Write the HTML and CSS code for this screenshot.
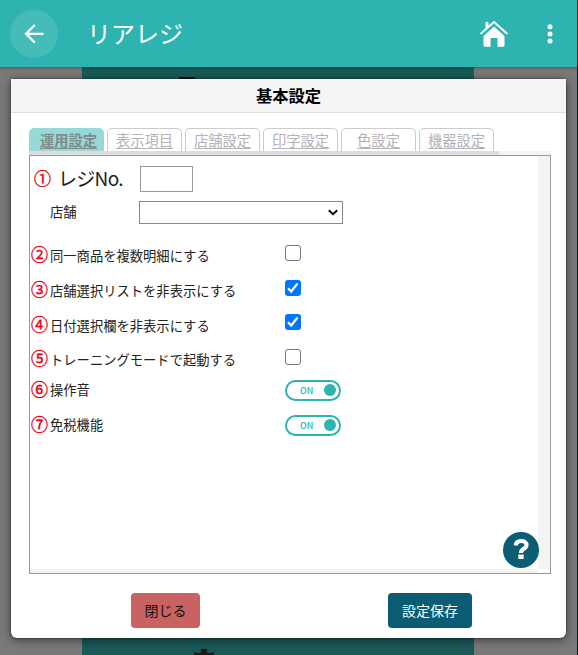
FILE: index.html
```html
<!DOCTYPE html>
<html lang="ja">
<head>
<meta charset="utf-8">
<title>リアレジ</title>
<link rel="stylesheet" href="styles.css">
</head>
<body>
<div class="screen">
  <header class="appbar">
    <button class="back" aria-label="戻る"><svg width="48" height="48" viewBox="0 0 48 48"><path d="M33.500 23.800H15.800M24.800 15 16 23.800l8.800 8.800" fill="none" stroke="#fff" stroke-width="2.200"/></svg></button>
    <h1>リアレジ</h1>
    <svg class="home" width="30" height="28" viewBox="0 0 30 28"><path d="M6.500 9V2.500L8 1.500l1.500 1V6z" fill="#fff"/><path d="M1.500 14 15 2l13.500 12" fill="none" stroke="#fff" stroke-width="1.900"/><path d="M15 6.500 25.500 16v9.500q0 1.300-1.300 1.300h-5.700V18h-7v8.800H5.800q-1.300 0-1.300-1.300V16z" fill="#fff"/></svg>
    <svg class="more" width="8" height="20" viewBox="0 0 8 20"><g fill="#fff"><circle cx="4" cy="2.700" r="2.500"/><circle cx="4" cy="9.900" r="2.500"/><circle cx="4" cy="17.100" r="2.500"/></g></svg>
  </header>
  <main class="backdrop">
    <div class="column">
      <span class="sliver"></span>
      <svg class="gear" width="24" height="6" viewBox="0 0 24 6"><path d="M1 6 3 3.300 7 4l2-.8V0h6v3.200l2 .8 4-.7L23 6z" fill="#1b1d1d"/></svg>
    </div>
  </main>
  <section class="dialog">
    <h2>基本設定</h2>
    <nav class="tabs">
      <a class="tab active">運用設定</a><a class="tab">表示項目</a><a class="tab">店舗設定</a><a class="tab">印字設定</a><a class="tab">色設定</a><a class="tab">機器設定</a>
    </nav>
    <div class="tabscroll"><div class="thumb"></div></div>
    <div class="panel">
      <form class="form">
        <div class="row register"><span class="num">①</span><label>レジNo.</label><input class="regno" type="text"></div>
        <div class="row shop"><span class="num"></span><label>店舗</label><div class="select"><svg width="10" height="7" viewBox="0 0 10 7"><path d="M.8 1.200 5 5.200l4.200-4" fill="none" stroke="#000" stroke-width="1.900"/></svg></div></div>
        <div class="row"><span class="num">②</span><label>同一商品を複数明細にする</label><span class="check"></span></div>
        <div class="row"><span class="num">③</span><label>店舗選択リストを非表示にする</label><span class="check on"><svg width="16" height="16" viewBox="0 0 16 16"><path d="m3 8.300 3.200 3.200L12.500 3.500" fill="none" stroke="#fff" stroke-width="2.200"/></svg></span></div>
        <div class="row"><span class="num">④</span><label>日付選択欄を非表示にする</label><span class="check on"><svg width="16" height="16" viewBox="0 0 16 16"><path d="m3 8.300 3.200 3.200L12.500 3.500" fill="none" stroke="#fff" stroke-width="2.200"/></svg></span></div>
        <div class="row"><span class="num">⑤</span><label>トレーニングモードで起動する</label><span class="check"></span></div>
        <div class="row sound"><span class="num">⑥</span><label>操作音</label><span class="toggle">ON<i></i></span></div>
        <div class="row tax"><span class="num">⑦</span><label>免税機能</label><span class="toggle">ON<i></i></span></div>
      </form>
      <div class="vtrack"></div>
      <div class="htrack"></div>
      <button class="help" aria-label="ヘルプ"><svg width="36" height="36" viewBox="0 0 36 36"><path d="M12.800 13.500C13 10.500 15 9 18.200 9c3.200 0 5.300 1.500 5.300 4 0 4-5.600 3.500-5.600 8" fill="none" stroke="#fff" stroke-width="4.200"/><path d="M15.300 22.500h5.400V27h-5.400z" fill="#fff"/></svg></button>
    </div>
    <footer class="actions"><button class="btn close">閉じる</button><button class="btn save">設定保存</button></footer>
  </section>
</div>
</body>
</html>
```

FILE: styles.css
```css
* { box-sizing: border-box; }
body {
  margin: 0;
  font-family: "Noto Sans CJK JP", sans-serif;
  color: #222;
  overflow: hidden;
}
button { padding: 0; border: 0; font-family: inherit; }
svg { display: block; flex: none; }
h1, h2 { margin: 0; }

.screen {
  position: relative;
  display: flex;
  flex-direction: column;
  width: 578px;
  height: 655px;
  border-right: 1px solid #14142a;
  background: #797979;
}
.appbar {
  display: flex;
  align-items: center;
  flex: none;
  height: 67px;
  padding: 0 23px 0 10px;
  background: #2eb4b0;
  box-shadow: 0 1px 3px rgba(0, 0, 0, .35);
  z-index: 1;
}
.back {
  width: 48px;
  height: 48px;
  border-radius: 50%;
  background: #45bcb8;
}
.appbar h1 {
  margin-left: 29px;
  padding-bottom: 2px;
  font-size: 24px;
  line-height: 34px;
  font-weight: 400;
  color: #fff;
}
.home { margin-left: auto; }
.more { margin-left: 37px; }

.backdrop { flex: 1; display: flex; padding-left: 82px; }
.column {
  display: flex;
  flex-direction: column;
  justify-content: space-between;
  width: 392px;
  background: #195a58;
}
.sliver { width: 16px; height: 12px; margin-left: 97px; border-bottom: 2px solid #111; }
.gear { margin-left: 110px; }

.dialog {
  position: absolute;
  left: 11px;
  top: 79px;
  z-index: 2;
  width: 555px;
  height: 559px;
  border-radius: 2px 2px 6px 6px;
  background: #fff;
  box-shadow: 0 0 2px rgba(0, 0, 0, .6), 0 2px 10px rgba(0, 0, 0, .5);
}
.dialog h2 {
  height: 34px;
  border-bottom: 1px solid #e0e0e0;
  background: #f5f5f5;
  font-size: 16.300px;
  line-height: 32px;
  font-weight: 700;
  text-align: center;
  color: #000;
}
.tabs { display: flex; gap: 3px; margin: 15px 0 0 18px; }
.tab {
  width: 75px;
  height: 23px;
  border: 1px solid #ccc;
  border-bottom: 0;
  border-radius: 5px 5px 0 0;
  font-size: 14.300px;
  line-height: 21px;
  text-align: center;
  text-decoration: underline;
  text-underline-offset: 2px;
  color: #b2b2b8;
}
.tab.active {
  border-color: #96d9d7;
  background: #96d9d7;
  font-weight: 700;
  color: #7d8b8b;
  padding-left: 4px;
}
.tabscroll { width: 522px; margin-left: 18px; background: #f4f4f4; }
.thumb { width: 470px; height: 4px; border-radius: 0 2px 2px 0; background: #dcdcdc; }

.panel {
  position: relative;
  display: grid;
  grid-template-columns: 1fr 12px;
  grid-template-rows: 1fr 4px;
  width: 522px;
  height: 419px;
  margin-left: 18px;
  border: 1px solid #999;
}
.form { padding-top: 5px; }
.vtrack { background: #f3f3f3; }
.htrack { background: #f3f3f3; }
.row {
  display: grid;
  grid-template-columns: 20px 235px 1fr;
  align-items: center;
  height: 34.700px;
}
.num {
  padding: 0 0 2px 1px;
  font-size: 17px;
  line-height: 22px;
  color: #e60012;
  -webkit-text-stroke: .4px #e60012;
}
.row label { font-size: 13.300px; line-height: 20px; padding-top: 2px; white-space: nowrap; }
.row .num + label + .check { align-self: start; margin-top: 7px; }
.register { grid-template-columns: 28px 82px 1fr; height: 36px; }
.register .num { padding-left: 4px; }
.register label { font-size: 19px; line-height: 28px; padding: 0 0 3px; letter-spacing: -.7px; }
.regno { width: 53px; height: 26px; border: 1px solid #999; }
.shop { grid-template-columns: 20px 89px 1fr; height: 31px; margin-bottom: 10px; }
.shop label { padding: 0 0 2px; }
.select {
  display: flex;
  align-items: center;
  justify-content: flex-end;
  width: 204px;
  height: 23px;
  padding-right: 4px;
  border: 1px solid #888;
}
.check {
  width: 16px;
  height: 16px;
  border: 1px solid #767676;
  border-radius: 3px;
}
.check.on { border: 0; background: #0075ff; }
.sound { height: 27px; }
.sound label, .tax label { padding: 0; }
.tax { height: 43px; }
.toggle {
  display: flex;
  align-items: center;
  justify-content: space-between;
  width: 56px;
  height: 21px;
  padding: 0 3px 0 13px;
  border: 2px solid #2eb4b0;
  border-radius: 11px;
  font-size: 9px;
  font-weight: 500;
  line-height: 12px;
  padding-top: 1px;
  color: #2eb4b0;
}
.toggle i { width: 12px; height: 12px; margin-top: -1px; border-radius: 50%; background: #2eb4b0; }
.help {
  position: absolute;
  right: 11px;
  bottom: 5px;
  width: 36px;
  height: 36px;
  border-radius: 50%;
  background: #0b5d73;
}
.actions {
  display: flex;
  justify-content: space-between;
  padding: 19px 94px 0 120px;
}
.btn { height: 35px; padding-bottom: 2px; border-radius: 4px; font-size: 14px; }
.close { width: 69px; background: #cb6262; color: #111; }
.save { width: 84px; background: #0b5d73; color: #fff; }
```
